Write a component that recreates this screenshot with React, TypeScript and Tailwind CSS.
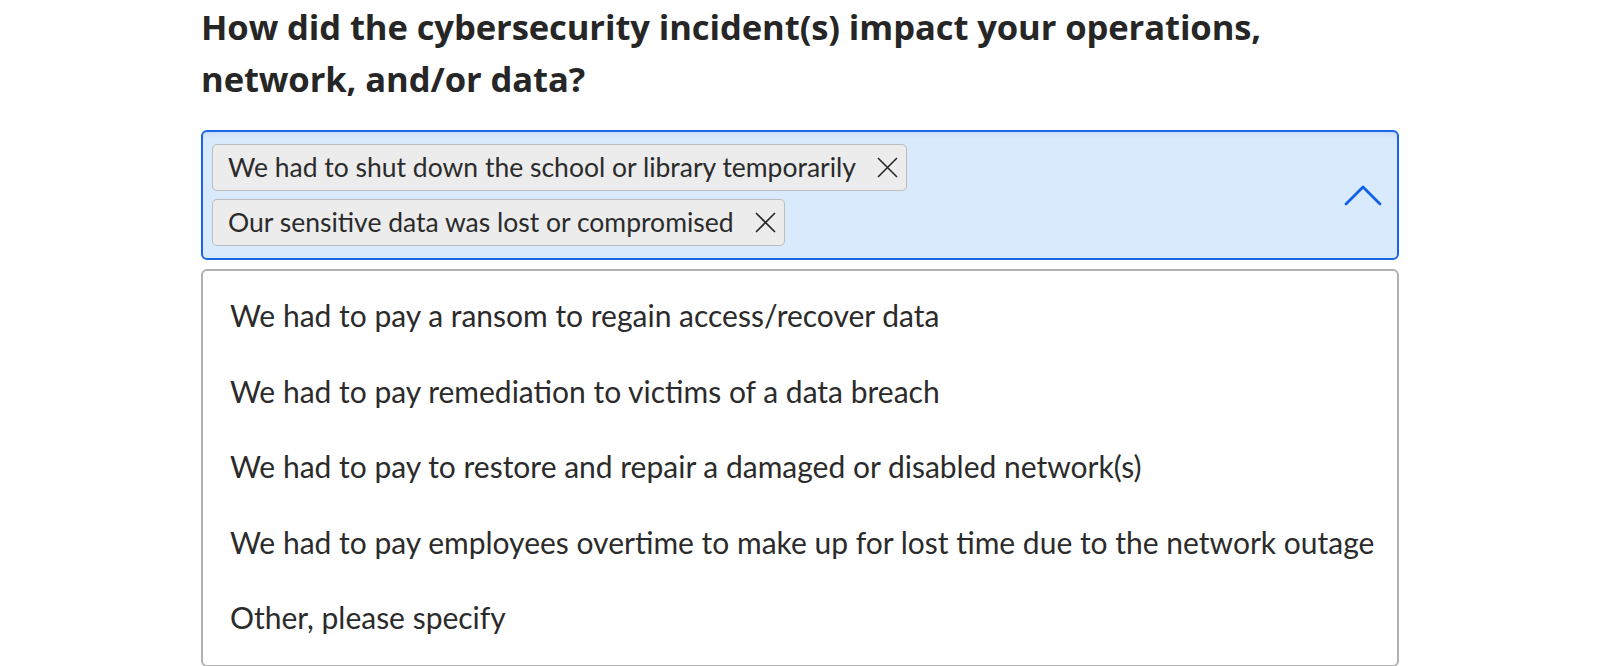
const chips = [
  "We had to shut down the school or library temporarily",
  "Our sensitive data was lost or compromised",
];

const options = [
  "We had to pay a ransom to regain access/recover data",
  "We had to pay remediation to victims of a data breach",
  "We had to pay to restore and repair a damaged or disabled network(s)",
  "We had to pay employees overtime to make up for lost time due to the network outage",
  "Other, please specify",
];

function XIcon() {
  return (
    <svg width="23" height="23" viewBox="0 0 23 23" fill="none" stroke="#262626" strokeWidth="1.6">
      <path d="M2 2 L21 21 M21 2 L2 21" />
    </svg>
  );
}

function ChevronUp() {
  return (
    <svg width="38" height="21" viewBox="0 0 38 21" fill="none" stroke="#1060e8" strokeWidth="2.8" strokeLinecap="round" strokeLinejoin="round">
      <path d="M2 19 L19 2 L36 19" />
    </svg>
  );
}

export default function App() {
  return (
    <div className="min-h-screen bg-white pl-[201px] pt-[1px] font-['Lato',sans-serif] text-[#262626]">
      <h2 className="w-[1198px] font-['Open_Sans',sans-serif] text-[34.6px] font-bold leading-[52px] tracking-[-0.1px]">
        How did the cybersecurity incident(s) impact your operations,
        <br />
        network, and/or data?
      </h2>

      <div className="mt-[25px] w-[1198px] flex items-center justify-between rounded-[6px] border-2 border-[#1b66e8] bg-[#d9eafd] py-[12px] pl-[9px] pr-[15px] shadow-[inset_0_4px_4px_-2px_rgba(0,40,90,0.08)]">
        <div className="flex flex-col items-start gap-[8px]">
          {chips.map((c) => (
            <div
              key={c}
              className="flex h-[47px] items-center gap-[20px] rounded-[5px] border border-[#bcbcbc] bg-[#ececec] pl-[15px] pr-[7px] text-[26.5px] text-[#2b2b2b]"
            >
              <span>{c}</span>
              <XIcon />
            </div>
          ))}
        </div>
        <ChevronUp />
      </div>

      <div className="mt-[9px] w-[1198px] rounded-[6px] border-2 border-[#b1b1b1] pt-[7px] pb-[9px]">
        {options.map((o) => (
          <div key={o} className="flex h-[75.5px] items-center whitespace-nowrap pl-[27px] pr-[8px] text-[30px] text-[#2b2b2b]">
            {o}
          </div>
        ))}
      </div>
    </div>
  );
}
